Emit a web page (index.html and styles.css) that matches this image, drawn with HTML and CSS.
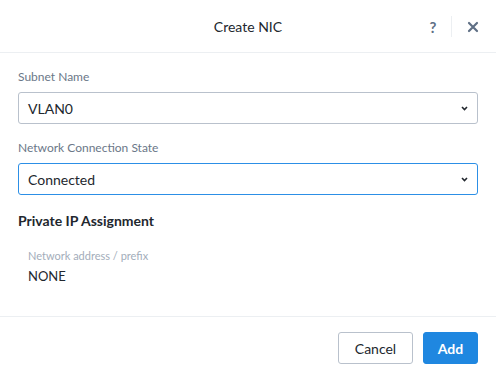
FILE: index.html
```html
<!DOCTYPE html>
<html lang="en">
<head>
    <meta charset="UTF-8">
    <meta name="viewport" content="width=device-width, initial-scale=1.0">
    <title>Create NIC</title>
    <link rel="stylesheet" href="styles.css">
</head>
<body>
    <div class="modal">
        <div class="modal-header">
            <h1 class="modal-title">Create NIC</h1>
            <div class="header-actions">
                <span class="help-btn">?</span>
                <span class="header-divider"></span>
                <span class="close-btn">
                    <svg width="12" height="12" viewBox="0 0 12 12">
                        <path d="M2 2 L10 10 M10 2 L2 10" stroke="#5f6f85" stroke-width="2.2" stroke-linecap="round"/>
                    </svg>
                </span>
            </div>
        </div>

        <div class="modal-body">
            <div class="field">
                <label class="field-label">Subnet Name</label>
                <div class="select">
                    <span>VLAN0</span>
                    <svg class="chevron" width="7" height="5" viewBox="0 0 7 5">
                        <path d="M1 1 L3.5 3.5 L6 1" stroke="#22272e" stroke-width="1.6" fill="none"/>
                    </svg>
                </div>
            </div>

            <div class="field">
                <label class="field-label">Network Connection State</label>
                <div class="select focused">
                    <span>Connected</span>
                    <svg class="chevron" width="7" height="5" viewBox="0 0 7 5">
                        <path d="M1 1 L3.5 3.5 L6 1" stroke="#22272e" stroke-width="1.6" fill="none"/>
                    </svg>
                </div>
            </div>

            <h2 class="section-title">Private IP Assignment</h2>

            <div class="ip-info">
                <div class="ip-label">Network address / prefix</div>
                <div class="ip-value">NONE</div>
            </div>
        </div>

        <div class="modal-footer">
            <button class="btn btn-secondary">Cancel</button>
            <button class="btn btn-primary">Add</button>
        </div>
    </div>
</body>
</html>
```

FILE: styles.css
```css
* {
    margin: 0;
    padding: 0;
    box-sizing: border-box;
}

body {
    font-family: Lato, "Open Sans", sans-serif;
    background: #ffffff;
    color: #22272e;
    width: 496px;
    height: 376px;
    overflow: hidden;
}

.modal {
    display: flex;
    flex-direction: column;
    height: 376px;
}

.modal-header {
    height: 53px;
    border-bottom: 1px solid #eceff2;
    display: flex;
    align-items: center;
    justify-content: center;
    position: relative;
}

.modal-title {
    font-size: 14px;
    font-weight: 400;
    color: #22272e;
}

.header-actions {
    position: absolute;
    right: 17px;
    top: 16px;
    display: flex;
    align-items: center;
    height: 21px;
}

.help-btn {
    font-size: 15px;
    font-weight: 700;
    color: #5f6f85;
    width: 12px;
    text-align: center;
}

.header-divider {
    width: 1px;
    height: 21px;
    background: #eceff2;
    margin: 0 15px 0 12px;
}

.close-btn {
    display: flex;
    align-items: center;
}

.modal-body {
    flex: 1;
    padding: 17px 18px 0 18px;
}

.field {
    margin-bottom: 17px;
}

.field-label {
    display: block;
    font-size: 12px;
    color: #6b7788;
    margin-bottom: 8px;
    line-height: 14px;
}

.select {
    height: 32px;
    border: 1px solid #b9c1cc;
    border-radius: 3px;
    display: flex;
    align-items: center;
    justify-content: space-between;
    padding: 0 9px 0 9px;
    font-size: 14px;
    color: #22272e;
}

.select.focused {
    border-color: #2c8fe6;
}

.section-title {
    font-size: 14px;
    font-weight: 700;
    color: #22272e;
    margin-top: 14px;
    line-height: 18px;
}

.ip-info {
    padding: 19px 10px 0;
}

.ip-label {
    font-size: 11px;
    color: #a3adba;
    line-height: 14px;
}

.ip-value {
    font-size: 13px;
    color: #22272e;
    margin-top: 5px;
}

.modal-footer {
    height: 60px;
    border-top: 1px solid #eceff2;
    display: flex;
    align-items: flex-start;
    justify-content: flex-end;
    gap: 10px;
    padding: 15px 18px 0;
}

.btn {
    height: 32px;
    border-radius: 3px;
    font-family: Lato, "Open Sans", sans-serif;
    font-size: 14px;
    cursor: pointer;
}

.btn-secondary {
    width: 75px;
    background: #ffffff;
    border: 1px solid #b9c1cc;
    color: #22272e;
}

.btn-primary {
    width: 55px;
    background: #1f87e0;
    border: 1px solid #1f87e0;
    color: #ffffff;
    font-weight: 700;
}
```
